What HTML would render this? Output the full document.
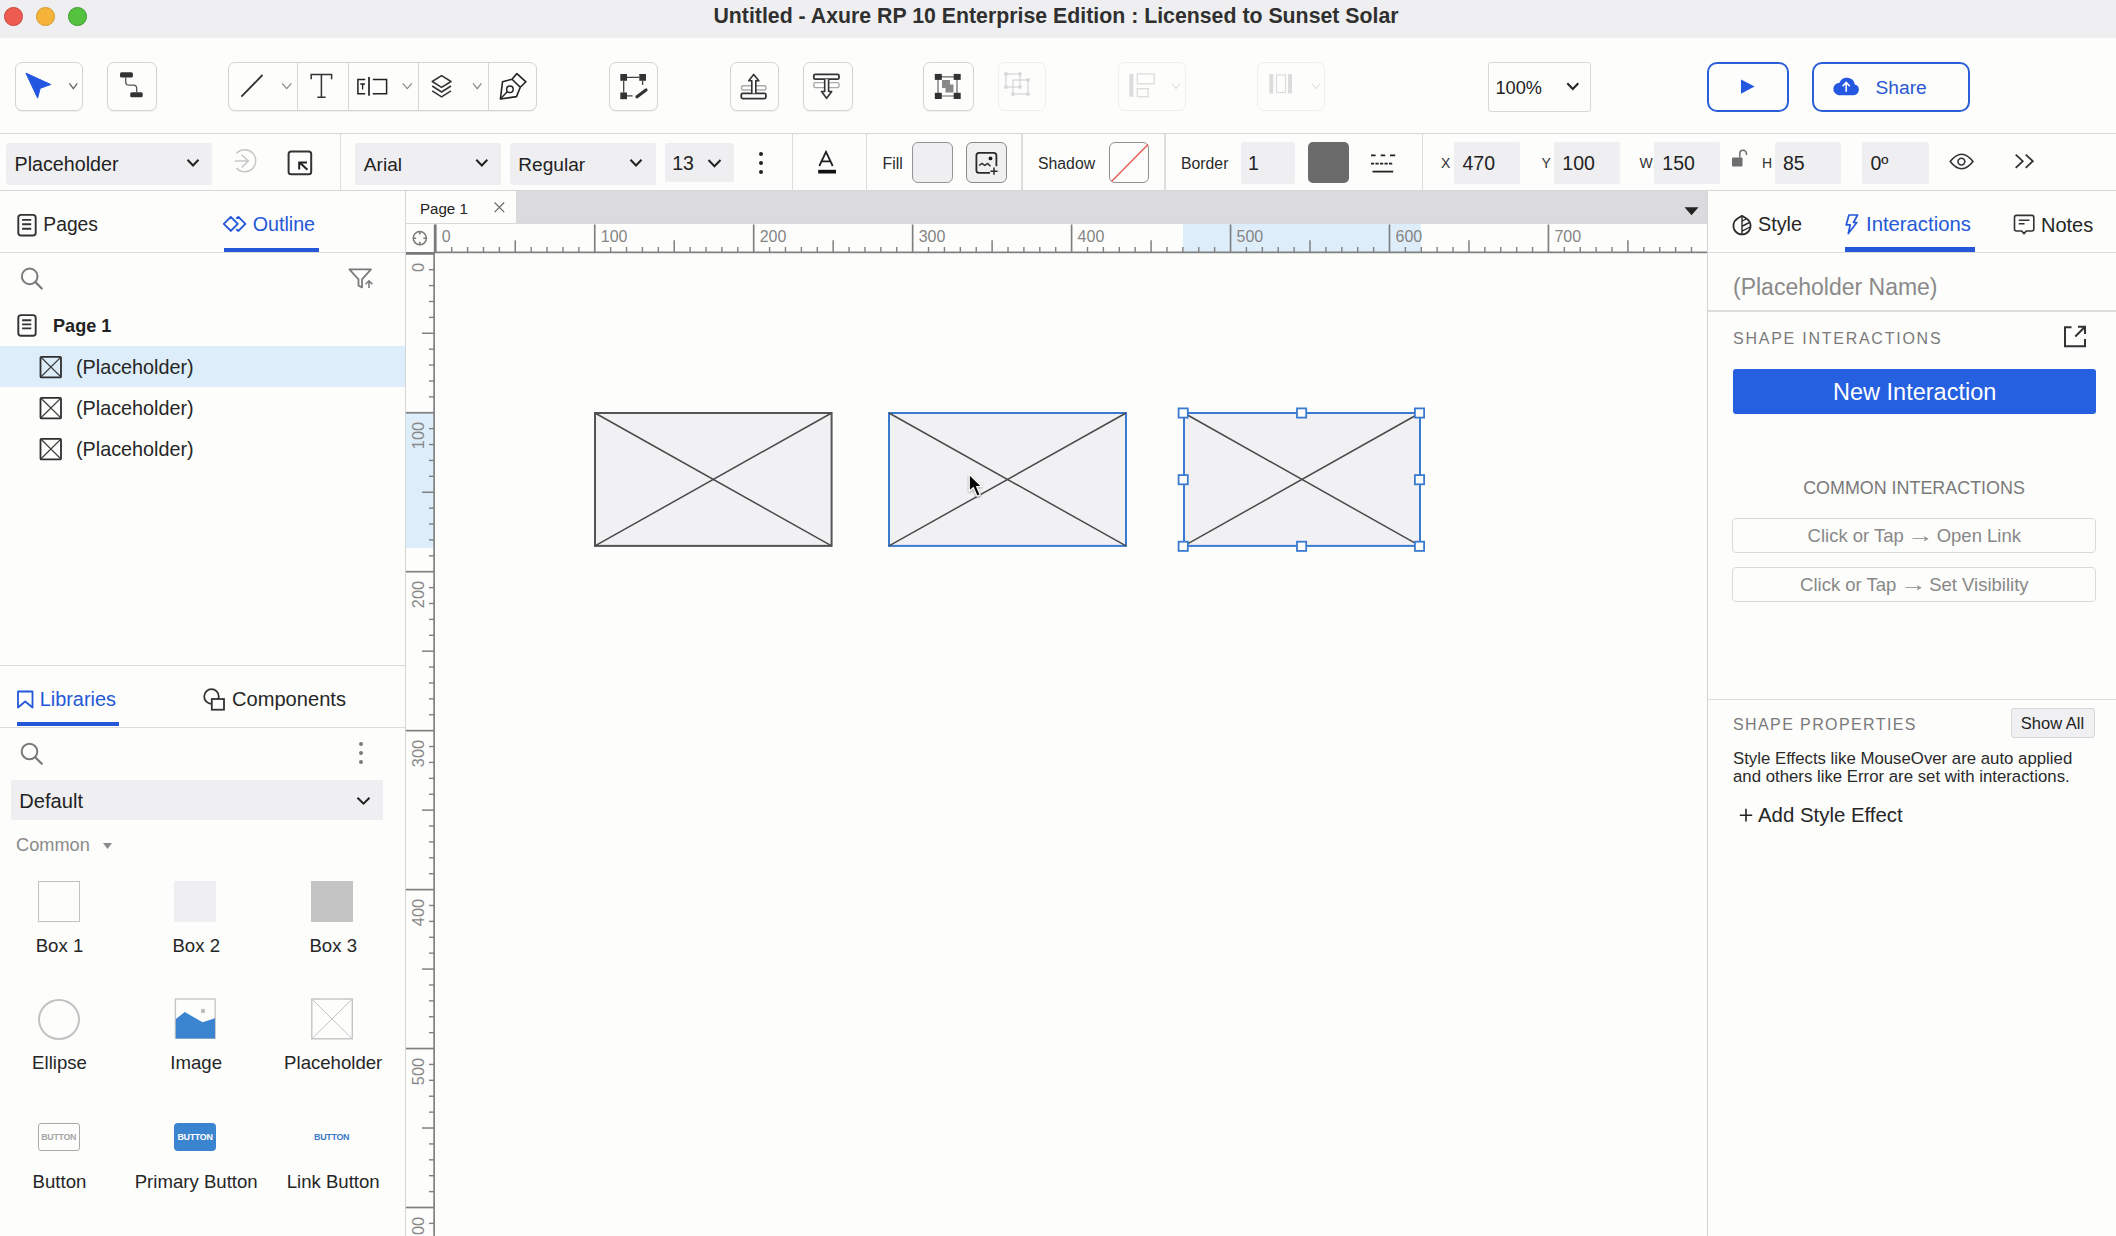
<!DOCTYPE html><html><head><meta charset="utf-8"><style>
html,body{margin:0;padding:0;}
body{width:2116px;height:1236px;overflow:hidden;position:relative;background:#fdfdfc;font-family:"Liberation Sans",sans-serif;}
div,span,svg{position:absolute;box-sizing:border-box;}
.t{white-space:nowrap;line-height:1;}
.ar{position:static;font-style:normal;display:inline-block;transform:scaleX(1.45);margin:0 2px;}
</style></head><body>
<div style="left:0px;top:0px;width:2116px;height:38px;background:#efeff1;"></div>
<div style="left:4.399999999999999px;top:7.300000000000001px;width:18.6px;height:18.6px;background:#ee5b51;border:1px solid #c8463c;border-radius:50%;"></div>
<div style="left:36.400000000000006px;top:7.300000000000001px;width:18.6px;height:18.6px;background:#f5b33a;border:1px solid #d49a2e;border-radius:50%;"></div>
<div style="left:68.0px;top:7.300000000000001px;width:18.6px;height:18.6px;background:#54c13f;border:1px solid #3f9a33;border-radius:50%;"></div>
<span class="t" style="left:556px;width:1000px;text-align:center;top:5.97px;font-size:21.3px;color:#303030;font-weight:700;">Untitled - Axure RP 10 Enterprise Edition : Licensed to Sunset Solar</span>
<div style="left:0px;top:38px;width:2116px;height:95px;background:#fdfdfc;"></div>
<div style="left:0px;top:133px;width:2116px;height:1px;background:#d6d6d6;"></div>
<div style="left:14.5px;top:62px;width:68.5px;height:49.3px;border:1.5px solid #d4d4d4;border-radius:7px;background:#fdfdfc;box-shadow:0 1px 1px rgba(0,0,0,0.06);"></div>
<svg style="left:14px;top:60px;" width="70" height="52" viewBox="14 60 70 52"><polygon points="25.9,73.1 50.8,84.5 40.2,88.3 37.6,98.1" fill="#2356e0" stroke="#2356e0" stroke-width="1" stroke-linejoin="round"/><polyline points="69.4,83.4 73.35,88.6 77.3,83.4" fill="none" stroke="#6a6a6a" stroke-width="1.4"/></svg>
<div style="left:106.8px;top:62px;width:50px;height:49.3px;border:1.5px solid #d4d4d4;border-radius:7px;background:#fdfdfc;box-shadow:0 1px 1px rgba(0,0,0,0.06);"></div>
<svg style="left:106px;top:60px;" width="52" height="52" viewBox="106 60 52 52"><rect x="120" y="72.2" width="12.9" height="5.3" rx="1.5" fill="#333"/><rect x="130.2" y="92.2" width="12.5" height="5" rx="1.5" fill="#333"/><path d="M125.7 77.5 V82 Q125.7 85.2 129 85.2 H133.5 Q136.7 85.2 136.7 88.5 V92.2" fill="none" stroke="#555" stroke-width="1.3"/></svg>
<div style="left:228px;top:61.8px;width:309.3px;height:49.3px;border:1.5px solid #d4d4d4;border-radius:7px;background:#fdfdfc;box-shadow:0 1px 1px rgba(0,0,0,0.06);"></div>
<div style="left:297px;top:63px;width:1px;height:47px;background:#d6d6d6;"></div>
<div style="left:348px;top:63px;width:1px;height:47px;background:#d6d6d6;"></div>
<div style="left:418px;top:63px;width:1px;height:47px;background:#d6d6d6;"></div>
<div style="left:488px;top:63px;width:1px;height:47px;background:#d6d6d6;"></div>
<svg style="left:226px;top:60px;" width="314" height="53" viewBox="226 60 314 53"><line x1="241.4" y1="96.6" x2="262.5" y2="75" stroke="#333" stroke-width="1.8"/><polyline points="282.2,83.4 286.75,88.6 291.3,83.4" fill="none" stroke="#8a8a8a" stroke-width="1.3"/><path d="M311.2 79.2 V74.4 H331.6 V79.2 M321.4 74.4 V97.3 M317.3 97.3 H325.6" fill="none" stroke="#333" stroke-width="1.5"/><path d="M365.2 79.4 H357.9 V93.8 H365.2 M372.8 79.4 H386.6 V93.8 H372.8" fill="none" stroke="#222" stroke-width="1.5"/><path d="M369 76.9 V95.8" stroke="#222" stroke-width="1.7"/><path d="M360.3 84 H365 M362.6 84 V89.5" stroke="#222" stroke-width="1.3"/><polyline points="402.7,83.4 407.25,88.6 411.8,83.4" fill="none" stroke="#8a8a8a" stroke-width="1.3"/><path d="M441.6 75.6 L451 81.5 L441.6 87.4 L432.2 81.5 Z" fill="none" stroke="#333" stroke-width="1.5" stroke-linejoin="round"/><path d="M432.2 86 L441.6 92 L451 86 M432.2 90.8 L441.6 96.8 L451 90.8" fill="none" stroke="#333" stroke-width="1.5" stroke-linejoin="round"/><polyline points="473,83.4 477.2,88.6 481.4,83.4" fill="none" stroke="#8a8a8a" stroke-width="1.3"/><path d="M500.4 99 L502.5 81.8 L512 79.2 L520.3 87.3 L516.5 96.6 Z M512 79.2 L516.9 73.6 L525.9 81.8 L520.3 87.3" fill="none" stroke="#222" stroke-width="1.6" stroke-linejoin="round"/><circle cx="509.9" cy="89.3" r="3.3" fill="none" stroke="#222" stroke-width="1.5"/><line x1="501" y1="98.3" x2="507.5" y2="91.6" stroke="#222" stroke-width="1.4"/></svg>
<div style="left:609.2px;top:61.8px;width:48.6px;height:49.5px;border:1.5px solid #d4d4d4;border-radius:7px;background:#fdfdfc;box-shadow:0 1px 1px rgba(0,0,0,0.06);"></div>
<svg style="left:608px;top:60px;" width="52" height="52" viewBox="608 60 52 52"><rect x="620.3" y="74" width="6.7" height="6.8" fill="#333"/><rect x="639.3" y="74" width="6.7" height="6.8" fill="#333"/><rect x="620.3" y="92.5" width="6.7" height="6.7" fill="#333"/><path d="M627 77.4 H639.3 M623.7 80.8 V92.5 M642.6 80.8 V85 M627 95.8 H632.6" stroke="#444" stroke-width="1.3" fill="none"/><path d="M637 96.8 L646 90" stroke="#333" stroke-width="3.2" stroke-linecap="round"/></svg>
<div style="left:730.3px;top:61.8px;width:48.5px;height:49.5px;border:1.5px solid #d4d4d4;border-radius:7px;background:#fdfdfc;box-shadow:0 1px 1px rgba(0,0,0,0.06);"></div>
<svg style="left:728px;top:60px;" width="54" height="52" viewBox="728 60 54 52"><rect x="741.5" y="85.7" width="24.5" height="4.3" rx="1.5" fill="none" stroke="#aaa" stroke-width="1.4"/><rect x="741.3" y="93.3" width="24.6" height="5.3" rx="1.5" fill="#fdfdfc" stroke="#333" stroke-width="1.8"/><path d="M751.8 93.3 V80.8 H748.7 L753.7 74.4 L758.8 80.8 H755.8 V93.3" fill="#fdfdfc" stroke="#333" stroke-width="1.6" stroke-linejoin="round"/></svg>
<div style="left:802.5px;top:61.8px;width:50px;height:49.5px;border:1.5px solid #d4d4d4;border-radius:7px;background:#fdfdfc;box-shadow:0 1px 1px rgba(0,0,0,0.06);"></div>
<svg style="left:800px;top:60px;" width="54" height="52" viewBox="800 60 54 52"><rect x="813.8" y="82.6" width="25.2" height="5" rx="1.5" fill="none" stroke="#aaa" stroke-width="1.4"/><rect x="813.8" y="74.4" width="25.2" height="4.8" rx="1.5" fill="#fdfdfc" stroke="#333" stroke-width="1.8"/><path d="M824.7 79.2 V91.5 H821.5 L826.6 98.3 L831.7 91.5 H828.6 V79.2" fill="#fdfdfc" stroke="#333" stroke-width="1.6" stroke-linejoin="round"/></svg>
<div style="left:923.3px;top:62px;width:50.3px;height:49px;border:1.5px solid #d4d4d4;border-radius:7px;background:#fdfdfc;box-shadow:0 1px 1px rgba(0,0,0,0.06);"></div>
<svg style="left:922px;top:60px;" width="54" height="52" viewBox="922 60 54 52"><path d="M938 76.8 H957 M938 96 H957 M938 76.8 V96 M957 76.8 V96" stroke="#666" stroke-width="1.2" fill="none"/><rect x="942" y="80" width="8" height="8" fill="#888"/><rect x="945.5" y="84.5" width="8" height="8" fill="#888"/><rect x="934.8" y="73.9" width="7" height="6" fill="#333"/><rect x="953.7" y="73.9" width="7" height="6" fill="#333"/><rect x="934.8" y="92.8" width="7" height="6.2" fill="#333"/><rect x="953.7" y="92.8" width="7" height="6.2" fill="#333"/></svg>
<div style="left:998px;top:62px;width:48px;height:49px;border:1.5px solid #efefef;border-radius:7px;background:#fdfdfc;"></div>
<svg style="left:996px;top:60px;" width="54" height="52" viewBox="996 60 54 52"><g fill="none" stroke="#d0d0d0" stroke-width="1.1"><rect x="1006" y="74" width="14" height="13"/><rect x="1013" y="80" width="15" height="14"/></g><g fill="#d8d8d8"><circle cx="1006" cy="74" r="2"/><circle cx="1020" cy="74" r="2"/><circle cx="1006" cy="87" r="2"/><circle cx="1020" cy="87" r="2"/><circle cx="1028" cy="80" r="2"/><circle cx="1013" cy="94" r="2"/><circle cx="1028" cy="94" r="2"/></g></svg>
<div style="left:1117.5px;top:62px;width:68.5px;height:49px;border:1.5px solid #efefef;border-radius:7px;background:#fdfdfc;"></div>
<svg style="left:1116px;top:60px;" width="72" height="52" viewBox="1116 60 72 52"><rect x="1129.4" y="73.9" width="4" height="22.8" fill="#dcdcdc"/><rect x="1137.3" y="73.9" width="16.9" height="9.9" fill="none" stroke="#dcdcdc" stroke-width="1.3"/><rect x="1137.3" y="88.7" width="10.9" height="8" fill="none" stroke="#dcdcdc" stroke-width="1.3"/><polyline points="1172,83.5 1176.0,88.5 1180,83.5" fill="none" stroke="#e0e0e0" stroke-width="1.2"/></svg>
<div style="left:1257.4px;top:62px;width:67.6px;height:49px;border:1.5px solid #efefef;border-radius:7px;background:#fdfdfc;"></div>
<svg style="left:1256px;top:60px;" width="72" height="52" viewBox="1256 60 72 52"><rect x="1269.3" y="74" width="4" height="19.5" fill="#dcdcdc"/><rect x="1288" y="74" width="4" height="19.5" fill="#dcdcdc"/><rect x="1276.5" y="75" width="9" height="17.5" fill="none" stroke="#dcdcdc" stroke-width="1.2"/><polyline points="1312,83.5 1316.0,88.5 1320,83.5" fill="none" stroke="#e0e0e0" stroke-width="1.2"/></svg>
<div style="left:1488px;top:62px;width:103px;height:49.5px;border:1.3px solid #d8d8d8;border-radius:3px;background:#fdfdfc;"></div>
<span class="t" style="left:1495.5px;top:79.39px;font-size:18.2px;color:#222;font-weight:400;">100%</span>
<svg style="left:1560px;top:75px;" width="25" height="25" viewBox="1560 75 25 25"><polyline points="1567.3,83.3 1572.8,89 1578.3,83.3" fill="none" stroke="#222" stroke-width="2.0"/></svg>
<div style="left:1707px;top:61.6px;width:81.5px;height:50.2px;border:2px solid #2a5fd6;border-radius:10px;background:#fdfdfc;"></div>
<svg style="left:1735px;top:75px;" width="25" height="25" viewBox="1735 75 25 25"><polygon points="1741,79.5 1741,93.8 1754.6,86.6" fill="#2458e0"/></svg>
<div style="left:1811.7px;top:61.6px;width:158px;height:50.2px;border:2px solid #2a5fd6;border-radius:10px;background:#fdfdfc;"></div>
<svg style="left:1830px;top:72px;" width="32" height="26" viewBox="1830 72 32 26"><path d="M1838.5 95.2 H1853.5 A5.5 5.5 0 0 0 1854.8 84.4 A8 8 0 0 0 1839.5 82.7 A6.3 6.3 0 0 0 1838.5 95.2 Z" fill="#2458e0"/><path d="M1846.2 91.7 V82.7 M1842.6 86.2 L1846.2 82.5 L1849.8 86.2" fill="none" stroke="#fff" stroke-width="1.6"/></svg>
<span class="t" style="left:1875.5px;top:78.35px;font-size:19.2px;color:#2a58d2;font-weight:400;">Share</span>
<div style="left:0px;top:134px;width:2116px;height:56px;background:#fdfdfc;"></div>
<div style="left:0px;top:190px;width:2116px;height:1px;background:#d6d6d6;"></div>
<div style="left:339.7px;top:134px;width:1.2px;height:56px;background:#dddddd;"></div>
<div style="left:791.6px;top:134px;width:1.2px;height:56px;background:#dddddd;"></div>
<div style="left:865.6999999999999px;top:134px;width:1.2px;height:56px;background:#dddddd;"></div>
<div style="left:1021.4px;top:134px;width:1.2px;height:56px;background:#dddddd;"></div>
<div style="left:1164.4px;top:134px;width:1.2px;height:56px;background:#dddddd;"></div>
<div style="left:1421.8000000000002px;top:134px;width:1.2px;height:56px;background:#dddddd;"></div>
<div style="left:6px;top:142.7px;width:206px;height:42px;background:#efeff1;border-radius:2px;"></div>
<span class="t" style="left:14.5px;top:154.52px;font-size:19.7px;color:#222;font-weight:400;">Placeholder</span>
<svg style="left:180px;top:150px;" width="25" height="25" viewBox="180 150 25 25"><polyline points="187.5,159.7 193.0,165.5 198.5,159.7" fill="none" stroke="#222" stroke-width="2.0"/></svg>
<svg style="left:228px;top:146px;" width="32" height="30" viewBox="228 146 32 30"><path d="M236.5 153.5 A11 11 0 1 1 236.5 168" fill="none" stroke="#c6c6c6" stroke-width="1.5"/><path d="M234.8 161 H248.4 M241.6 154.7 L248.4 161 L241.6 167.5" fill="none" stroke="#c6c6c6" stroke-width="1.5"/></svg>
<svg style="left:284px;top:146px;" width="32" height="32" viewBox="284 146 32 32"><rect x="288.6" y="151.4" width="22.6" height="22.8" rx="2.5" fill="none" stroke="#333" stroke-width="2"/><path d="M307.4 169.8 L299.4 162.2 M299.2 169.6 V162.4 H307" fill="none" stroke="#222" stroke-width="2"/></svg>
<div style="left:355px;top:142.7px;width:146px;height:42px;background:#efeff1;border-radius:2px;"></div>
<span class="t" style="left:363.8px;top:155.03px;font-size:19.1px;color:#222;font-weight:400;">Arial</span>
<svg style="left:465px;top:150px;" width="25" height="25" viewBox="465 150 25 25"><polyline points="476.3,159.7 481.8,165.5 487.3,159.7" fill="none" stroke="#222" stroke-width="2.0"/></svg>
<div style="left:510px;top:142.7px;width:145.6px;height:42px;background:#efeff1;border-radius:2px;"></div>
<span class="t" style="left:518.3px;top:155.03px;font-size:19.1px;color:#222;font-weight:400;">Regular</span>
<svg style="left:620px;top:150px;" width="25" height="25" viewBox="620 150 25 25"><polyline points="630.5,159.7 636.0,165.5 641.5,159.7" fill="none" stroke="#222" stroke-width="2.0"/></svg>
<div style="left:664.9px;top:142.8px;width:69px;height:39.5px;background:#efeff1;border-radius:2px;"></div>
<span class="t" style="left:672.2px;top:154.49px;font-size:19.5px;color:#222;font-weight:400;">13</span>
<svg style="left:700px;top:150px;" width="25" height="25" viewBox="700 150 25 25"><polyline points="708.5,160 714.5,166.2 720.5,160" fill="none" stroke="#222" stroke-width="2.0"/></svg>
<div style="left:758.9px;top:151.6px;width:4.2px;height:4.2px;background:#222;border-radius:50%;"></div>
<div style="left:758.9px;top:160.5px;width:4.2px;height:4.2px;background:#222;border-radius:50%;"></div>
<div style="left:758.9px;top:169.8px;width:4.2px;height:4.2px;background:#222;border-radius:50%;"></div>
<svg style="left:812px;top:146px;" width="30" height="30" viewBox="812 146 30 30"><path d="M819.3 166 L826 151.8 L832.7 166 M821.5 161.3 H830.5" fill="none" stroke="#222" stroke-width="1.8"/><rect x="818.2" y="169.8" width="17.8" height="3.7" fill="#111"/></svg>
<span class="t" style="left:882.5px;top:155.63px;font-size:15.8px;color:#2a2a2a;font-weight:400;">Fill</span>
<div style="left:911.8px;top:142.4px;width:40.9px;height:40.8px;border:1.8px solid #959595;border-radius:6px;background:#efeff1;"></div>
<div style="left:966px;top:142.4px;width:40.5px;height:40.8px;border:1.8px solid #8a8a8a;border-radius:6px;background:#f0f0f0;"></div>
<svg style="left:970px;top:148px;" width="34" height="30" viewBox="970 148 34 30"><path d="M990 172.9 H979 A2.6 2.6 0 0 1 976.4 170.3 V155.4 A2.6 2.6 0 0 1 979 152.8 H993.8 A2.6 2.6 0 0 1 996.4 155.4 V166.2" fill="none" stroke="#2a2a2a" stroke-width="1.8"/><circle cx="990.5" cy="158.4" r="1.9" fill="#1a1a1a"/><path d="M979.1 165.5 L982 163.4 L984.8 165.5 L987.7 163.4 L990.5 166.2" fill="none" stroke="#2a2a2a" stroke-width="1.4" stroke-linejoin="round"/><path d="M994 167.6 V174.8 M990.4 171.2 H997.6" stroke="#2a2a2a" stroke-width="1.5"/></svg>
<span class="t" style="left:1038px;top:155.63px;font-size:15.8px;color:#2a2a2a;font-weight:400;">Shadow</span>
<div style="left:1109.3px;top:142.4px;width:40px;height:40.8px;border:1.8px solid #8f8f8f;border-radius:6px;background:#fdfdfc;"></div>
<svg style="left:1109px;top:142px;" width="41" height="42" viewBox="1109 142 41 42"><line x1="1111.5" y1="181.5" x2="1148" y2="144.5" stroke="#e4605c" stroke-width="1.5"/></svg>
<span class="t" style="left:1181px;top:155.63px;font-size:15.8px;color:#2a2a2a;font-weight:400;">Border</span>
<div style="left:1241px;top:142.4px;width:53.5px;height:41.6px;background:#efeff1;border-radius:2px;"></div>
<span class="t" style="left:1248px;top:154.49px;font-size:19.5px;color:#222;font-weight:400;">1</span>
<div style="left:1308px;top:142.4px;width:40.5px;height:40.8px;background:#6b6b6b;border-radius:5px;"></div>
<svg style="left:1366px;top:150px;" width="34" height="26" viewBox="1366 150 34 26"><path d="M1371 155.4 H1375.6 M1380.7 155.4 H1385.2 M1390 155.4 H1395.2" stroke="#222" stroke-width="1.8"/><path d="M1371 163.6 H1393.2" stroke="#222" stroke-width="1.8" stroke-dasharray="3.2 1.3"/><path d="M1372.5 171.6 H1393.2" stroke="#222" stroke-width="1.8"/></svg>
<span class="t" style="left:1441.1px;top:155.75px;font-size:14px;color:#333;font-weight:400;">X</span>
<div style="left:1454.2px;top:142.4px;width:66px;height:41.2px;background:#efeff1;border-radius:2px;"></div>
<span class="t" style="left:1462.5px;top:154.49px;font-size:19.5px;color:#222;font-weight:400;">470</span>
<span class="t" style="left:1541.6px;top:155.75px;font-size:14px;color:#333;font-weight:400;">Y</span>
<div style="left:1554px;top:142.4px;width:66px;height:41.2px;background:#efeff1;border-radius:2px;"></div>
<span class="t" style="left:1562.3px;top:154.49px;font-size:19.5px;color:#222;font-weight:400;">100</span>
<span class="t" style="left:1639.5px;top:155.75px;font-size:14px;color:#333;font-weight:400;">W</span>
<div style="left:1654px;top:142.4px;width:66px;height:41.2px;background:#efeff1;border-radius:2px;"></div>
<span class="t" style="left:1662.3px;top:154.49px;font-size:19.5px;color:#222;font-weight:400;">150</span>
<svg style="left:1728px;top:145px;" width="24" height="26" viewBox="1728 145 24 26"><rect x="1732" y="157.5" width="10.5" height="9" rx="1" fill="#6e6e6e"/><path d="M1739.8 157.5 V153.5 A3.3 3.3 0 0 1 1746.4 153.5 V155" fill="none" stroke="#6e6e6e" stroke-width="1.5"/></svg>
<span class="t" style="left:1762px;top:155.75px;font-size:14px;color:#333;font-weight:400;">H</span>
<div style="left:1774.7px;top:142.4px;width:66.3px;height:41.2px;background:#efeff1;border-radius:2px;"></div>
<span class="t" style="left:1783px;top:154.49px;font-size:19.5px;color:#222;font-weight:400;">85</span>
<div style="left:1862px;top:142.4px;width:67px;height:41.2px;background:#efeff1;border-radius:2px;"></div>
<span class="t" style="left:1870.5px;top:154.49px;font-size:19.5px;color:#222;font-weight:400;">0º</span>
<svg style="left:1946px;top:150px;" width="32" height="24" viewBox="1946 150 32 24"><path d="M1950.2 161.6 Q1961.6 147 1973 161.6 Q1961.6 176 1950.2 161.6 Z" fill="none" stroke="#333" stroke-width="1.6" stroke-linejoin="round"/><circle cx="1961.4" cy="161.6" r="3.4" fill="none" stroke="#333" stroke-width="1.6"/></svg>
<svg style="left:2010px;top:150px;" width="28" height="24" viewBox="2010 150 28 24"><path d="M2015.7 154.6 L2022.8 161.2 L2015.7 167.9 M2025.7 154.6 L2032.8 161.2 L2025.7 167.9" fill="none" stroke="#333" stroke-width="1.8"/></svg>
<div style="left:0px;top:191px;width:405.5px;height:1045px;background:#fdfdfc;"></div>
<div style="left:405.2px;top:191px;width:1.2px;height:1045px;background:#d4d4d4;"></div>
<svg style="left:14px;top:210px;" width="26" height="30" viewBox="14 210 26 30"><rect x="18.3" y="214.9" width="17.4" height="20.6" rx="2.8" fill="none" stroke="#333" stroke-width="1.9"/><path d="M22.1 219.9 H31.2 M22.1 224.3 H31.2 M22.1 228.7 H31.2" stroke="#333" stroke-width="1.9"/></svg>
<span class="t" style="left:43.3px;top:214.86px;font-size:19.3px;color:#262626;font-weight:400;">Pages</span>
<svg style="left:220px;top:212px;" width="30" height="24" viewBox="220 212 30 24"><path d="M230.8 216.9 L237.8 223.9 L230.8 230.9 L223.8 223.9 Z M236.2 218.5 L238.4 216.9 L245.4 223.9 L238.4 230.9 L236.2 229.3" fill="none" stroke="#2458d8" stroke-width="1.9" stroke-linejoin="round"/></svg>
<span class="t" style="left:252.7px;top:214.52px;font-size:19.7px;color:#2458d8;font-weight:400;">Outline</span>
<div style="left:0px;top:252px;width:405.5px;height:1.3px;background:#dcdcdc;"></div>
<div style="left:224px;top:247.6px;width:95.3px;height:4px;background:#2458d8;"></div>
<svg style="left:18px;top:264px;" width="28" height="28" viewBox="18 264 28 28"><circle cx="29.7" cy="276.4" r="7.8" fill="none" stroke="#7a7a7a" stroke-width="2"/><line x1="35.4" y1="282.1" x2="41.8" y2="288.5" stroke="#7a7a7a" stroke-width="2.2" stroke-linecap="round"/></svg>
<svg style="left:346px;top:266px;" width="30" height="25" viewBox="346 266 30 25"><path d="M349.4 269.4 H371 L362 279.3 V287.4 L358.5 285.8 V279.3 Z" fill="none" stroke="#7a7a7a" stroke-width="1.8" stroke-linejoin="round"/><path d="M369 288 V281.5 M365.6 284.2 L369 280.8 L372.4 284.2" fill="none" stroke="#7a7a7a" stroke-width="1.6"/></svg>
<svg style="left:14px;top:310px;" width="26" height="30" viewBox="14 310 26 30"><rect x="18.3" y="315.1" width="17.4" height="20.6" rx="2.8" fill="none" stroke="#333" stroke-width="1.9"/><path d="M22.1 320.3 H31.3 M22.1 324.4 H31.3 M22.1 328.4 H31.3" stroke="#333" stroke-width="1.9"/></svg>
<span class="t" style="left:53px;top:317.28px;font-size:18.1px;color:#222;font-weight:700;">Page 1</span>
<div style="left:0px;top:345.6px;width:405.2px;height:41px;background:#ddedfa;"></div>
<svg style="left:36px;top:352.8px;" width="30" height="28" viewBox="36 352.8 30 28"><rect x="40.5" y="356.6" width="20.5" height="20.6" rx="1" fill="none" stroke="#2e2e2e" stroke-width="1.8"/><path d="M40.8 356.8 L61 376.8 M61 356.8 L40.8 376.8" stroke="#3a3a3a" stroke-width="1.1"/></svg>
<span class="t" style="left:76px;top:357.74px;font-size:19.8px;color:#262626;font-weight:400;">(Placeholder)</span>
<svg style="left:36px;top:394.1px;" width="30" height="28" viewBox="36 394.1 30 28"><rect x="40.5" y="397.90000000000003" width="20.5" height="20.6" rx="1" fill="none" stroke="#2e2e2e" stroke-width="1.8"/><path d="M40.8 398.1 L61 418.1 M61 398.1 L40.8 418.1" stroke="#3a3a3a" stroke-width="1.1"/></svg>
<span class="t" style="left:76px;top:399.04px;font-size:19.8px;color:#262626;font-weight:400;">(Placeholder)</span>
<svg style="left:36px;top:435.4px;" width="30" height="28" viewBox="36 435.4 30 28"><rect x="40.5" y="439.2" width="20.5" height="20.6" rx="1" fill="none" stroke="#2e2e2e" stroke-width="1.8"/><path d="M40.8 439.4 L61 459.4 M61 439.4 L40.8 459.4" stroke="#3a3a3a" stroke-width="1.1"/></svg>
<span class="t" style="left:76px;top:440.34px;font-size:19.8px;color:#262626;font-weight:400;">(Placeholder)</span>
<div style="left:0px;top:665px;width:405.5px;height:1.2px;background:#dcdcdc;"></div>
<svg style="left:14px;top:686px;" width="24" height="26" viewBox="14 686 24 26"><path d="M18 691.5 H32.5 V707.5 L25.2 701.5 L18 707.5 Z" fill="none" stroke="#2458d8" stroke-width="1.8" stroke-linejoin="round"/></svg>
<span class="t" style="left:39.7px;top:689.65px;font-size:19.9px;color:#2458d8;font-weight:400;">Libraries</span>
<svg style="left:200px;top:686px;" width="30" height="26" viewBox="200 686 30 26"><circle cx="211.5" cy="696.5" r="7.3" fill="none" stroke="#333" stroke-width="1.8"/><rect x="211.8" y="699" width="12.2" height="10.7" fill="#fdfdfc" stroke="#333" stroke-width="1.8"/><path d="M211.8 699 A7.3 7.3 0 0 1 218.7 699" fill="none"/></svg>
<span class="t" style="left:232px;top:689.49px;font-size:20.1px;color:#262626;font-weight:400;">Components</span>
<div style="left:0px;top:726.6px;width:405.5px;height:1.3px;background:#dcdcdc;"></div>
<div style="left:17px;top:721.8px;width:102px;height:4.4px;background:#2458d8;"></div>
<svg style="left:18px;top:740px;" width="28" height="28" viewBox="18 740 28 28"><circle cx="29.5" cy="751.5" r="7.8" fill="none" stroke="#7a7a7a" stroke-width="2"/><line x1="35.2" y1="757.2" x2="41.8" y2="763.8" stroke="#7a7a7a" stroke-width="2.2" stroke-linecap="round"/></svg>
<div style="left:359px;top:741.9px;width:4px;height:4px;background:#7a7a7a;border-radius:50%;"></div>
<div style="left:359px;top:751.2px;width:4px;height:4px;background:#7a7a7a;border-radius:50%;"></div>
<div style="left:359px;top:760.3px;width:4px;height:4px;background:#7a7a7a;border-radius:50%;"></div>
<div style="left:11px;top:779.5px;width:371.7px;height:40.8px;background:#efeff1;border-radius:2px;"></div>
<span class="t" style="left:19.3px;top:791.29px;font-size:20.1px;color:#222;font-weight:400;">Default</span>
<svg style="left:350px;top:790px;" width="25" height="25" viewBox="350 790 25 25"><polyline points="357.5,797.7 363.5,803.7 369.5,797.7" fill="none" stroke="#222" stroke-width="2.0"/></svg>
<span class="t" style="left:16px;top:835.59px;font-size:18.2px;color:#8a8a8a;font-weight:400;">Common</span>
<svg style="left:100px;top:838px;" width="16" height="14" viewBox="100 838 16 14"><polygon points="103,843 112,843 107.5,849" fill="#8a8a8a"/></svg>
<span class="t" style="left:-440.5px;width:1000px;text-align:center;top:937.06px;font-size:18.6px;color:#262626;font-weight:400;">Box 1</span>
<span class="t" style="left:-303.8px;width:1000px;text-align:center;top:937.06px;font-size:18.6px;color:#262626;font-weight:400;">Box 2</span>
<span class="t" style="left:-166.8px;width:1000px;text-align:center;top:937.06px;font-size:18.6px;color:#262626;font-weight:400;">Box 3</span>
<span class="t" style="left:-440.5px;width:1000px;text-align:center;top:1054.26px;font-size:18.6px;color:#262626;font-weight:400;">Ellipse</span>
<span class="t" style="left:-303.8px;width:1000px;text-align:center;top:1054.26px;font-size:18.6px;color:#262626;font-weight:400;">Image</span>
<span class="t" style="left:-166.8px;width:1000px;text-align:center;top:1054.26px;font-size:18.6px;color:#262626;font-weight:400;">Placeholder</span>
<span class="t" style="left:-440.5px;width:1000px;text-align:center;top:1172.76px;font-size:18.6px;color:#262626;font-weight:400;">Button</span>
<span class="t" style="left:-303.8px;width:1000px;text-align:center;top:1172.76px;font-size:18.6px;color:#262626;font-weight:400;">Primary Button</span>
<span class="t" style="left:-166.8px;width:1000px;text-align:center;top:1172.76px;font-size:18.6px;color:#262626;font-weight:400;">Link Button</span>
<div style="left:38px;top:880.7px;width:41.5px;height:41.2px;border:1.5px solid #c2c2c2;background:#fdfdfc;"></div>
<div style="left:174px;top:880.7px;width:41.8px;height:41.2px;background:#efeff1;"></div>
<div style="left:311px;top:880.7px;width:41.8px;height:41.2px;background:#c4c4c4;"></div>
<div style="left:38px;top:998.5px;width:41.5px;height:41px;border:2px solid #c2c2c2;border-radius:50%;"></div>
<svg style="left:172px;top:996px;" width="46" height="46" viewBox="172 996 46 46"><rect x="175.4" y="999" width="39.8" height="39.3" fill="#fdfdfc" stroke="#c4c4c4" stroke-width="1.3"/><path d="M175.8 1019 L184.8 1012 L202.6 1022.3 L215 1018.2 V1038.6 H175.8 Z" fill="#3a84d0"/><circle cx="203" cy="1011" r="2.2" fill="#bbb"/></svg>
<svg style="left:309px;top:996px;" width="46" height="46" viewBox="309 996 46 46"><rect x="311.8" y="999" width="40.5" height="39.8" fill="#fdfdfc" stroke="#c4c4c4" stroke-width="1.4"/><path d="M311.8 999 L352.3 1038.8 M352.3 999 L311.8 1038.8" stroke="#c4c4c4" stroke-width="1"/></svg>
<div style="left:38px;top:1122.7px;width:41.5px;height:28px;border:1.8px solid #aaa;border-radius:3px;"></div>
<span class="t" style="left:-441.3px;width:1000px;text-align:center;top:1132.77px;font-size:8.9px;color:#a8a8a8;font-weight:700;letter-spacing:-0.3px;">BUTTON</span>
<div style="left:174.4px;top:1122.7px;width:41.3px;height:28px;background:#3a84d0;border-radius:4px;"></div>
<span class="t" style="left:-305px;width:1000px;text-align:center;top:1132.77px;font-size:8.9px;color:#fff;font-weight:700;letter-spacing:-0.3px;">BUTTON</span>
<span class="t" style="left:-168.39999999999998px;width:1000px;text-align:center;top:1132.77px;font-size:8.9px;color:#3a7ac8;font-weight:700;letter-spacing:-0.3px;">BUTTON</span>
<div style="left:406.4px;top:191px;width:1301px;height:1045px;background:#fdfdfb;"></div>
<div style="left:406.4px;top:191px;width:1301px;height:33px;background:#dbdbdd;"></div>
<div style="left:406.4px;top:191px;width:110px;height:33px;background:#fdfdfc;"></div>
<div style="left:406.4px;top:222.6px;width:1301px;height:1.8px;background:#d9d9db;"></div>
<span class="t" style="left:420px;top:200.92px;font-size:15.1px;color:#222;font-weight:400;">Page 1</span>
<svg style="left:490px;top:198px;" width="20" height="20" viewBox="490 198 20 20"><path d="M494.6 202.5 L504.2 212.1 M504.2 202.5 L494.6 212.1" stroke="#6a6a6a" stroke-width="1.2"/></svg>
<svg style="left:1680px;top:200px;" width="24" height="20" viewBox="1680 200 24 20"><polygon points="1684.5,207.2 1698.5,207.2 1691.5,215.2" fill="#222"/></svg>
<div style="left:406.4px;top:224px;width:1301px;height:29px;background:#fdfdfc;"></div>
<div style="left:406.4px;top:253px;width:28px;height:983px;background:#fdfdfc;"></div>
<div style="left:1182.865px;top:224px;width:238.42499999999998px;height:28px;background:#ddedfa;"></div>
<div style="left:406.4px;top:412.75px;width:27.5px;height:135.1075px;background:#ddedfa;"></div>
<svg style="left:406px;top:224px;" width="1302" height="30" viewBox="406 224 1302 30"><line x1="435.80" y1="224.5" x2="435.80" y2="252.5" stroke="#808080" stroke-width="1.7"/><line x1="451.69" y1="247" x2="451.69" y2="252.5" stroke="#808080" stroke-width="1.4"/><line x1="467.59" y1="247" x2="467.59" y2="252.5" stroke="#808080" stroke-width="1.4"/><line x1="483.49" y1="247" x2="483.49" y2="252.5" stroke="#808080" stroke-width="1.4"/><line x1="499.38" y1="247" x2="499.38" y2="252.5" stroke="#808080" stroke-width="1.4"/><line x1="515.27" y1="240.3" x2="515.27" y2="252.5" stroke="#808080" stroke-width="1.5"/><line x1="531.17" y1="247" x2="531.17" y2="252.5" stroke="#808080" stroke-width="1.4"/><line x1="547.07" y1="247" x2="547.07" y2="252.5" stroke="#808080" stroke-width="1.4"/><line x1="562.96" y1="247" x2="562.96" y2="252.5" stroke="#808080" stroke-width="1.4"/><line x1="578.86" y1="247" x2="578.86" y2="252.5" stroke="#808080" stroke-width="1.4"/><line x1="594.75" y1="224.5" x2="594.75" y2="252.5" stroke="#808080" stroke-width="1.7"/><line x1="610.64" y1="247" x2="610.64" y2="252.5" stroke="#808080" stroke-width="1.4"/><line x1="626.54" y1="247" x2="626.54" y2="252.5" stroke="#808080" stroke-width="1.4"/><line x1="642.43" y1="247" x2="642.43" y2="252.5" stroke="#808080" stroke-width="1.4"/><line x1="658.33" y1="247" x2="658.33" y2="252.5" stroke="#808080" stroke-width="1.4"/><line x1="674.23" y1="240.3" x2="674.23" y2="252.5" stroke="#808080" stroke-width="1.5"/><line x1="690.12" y1="247" x2="690.12" y2="252.5" stroke="#808080" stroke-width="1.4"/><line x1="706.01" y1="247" x2="706.01" y2="252.5" stroke="#808080" stroke-width="1.4"/><line x1="721.91" y1="247" x2="721.91" y2="252.5" stroke="#808080" stroke-width="1.4"/><line x1="737.81" y1="247" x2="737.81" y2="252.5" stroke="#808080" stroke-width="1.4"/><line x1="753.70" y1="224.5" x2="753.70" y2="252.5" stroke="#808080" stroke-width="1.7"/><line x1="769.60" y1="247" x2="769.60" y2="252.5" stroke="#808080" stroke-width="1.4"/><line x1="785.49" y1="247" x2="785.49" y2="252.5" stroke="#808080" stroke-width="1.4"/><line x1="801.38" y1="247" x2="801.38" y2="252.5" stroke="#808080" stroke-width="1.4"/><line x1="817.28" y1="247" x2="817.28" y2="252.5" stroke="#808080" stroke-width="1.4"/><line x1="833.17" y1="240.3" x2="833.17" y2="252.5" stroke="#808080" stroke-width="1.5"/><line x1="849.07" y1="247" x2="849.07" y2="252.5" stroke="#808080" stroke-width="1.4"/><line x1="864.96" y1="247" x2="864.96" y2="252.5" stroke="#808080" stroke-width="1.4"/><line x1="880.86" y1="247" x2="880.86" y2="252.5" stroke="#808080" stroke-width="1.4"/><line x1="896.75" y1="247" x2="896.75" y2="252.5" stroke="#808080" stroke-width="1.4"/><line x1="912.65" y1="224.5" x2="912.65" y2="252.5" stroke="#808080" stroke-width="1.7"/><line x1="928.54" y1="247" x2="928.54" y2="252.5" stroke="#808080" stroke-width="1.4"/><line x1="944.44" y1="247" x2="944.44" y2="252.5" stroke="#808080" stroke-width="1.4"/><line x1="960.34" y1="247" x2="960.34" y2="252.5" stroke="#808080" stroke-width="1.4"/><line x1="976.23" y1="247" x2="976.23" y2="252.5" stroke="#808080" stroke-width="1.4"/><line x1="992.12" y1="240.3" x2="992.12" y2="252.5" stroke="#808080" stroke-width="1.5"/><line x1="1008.02" y1="247" x2="1008.02" y2="252.5" stroke="#808080" stroke-width="1.4"/><line x1="1023.91" y1="247" x2="1023.91" y2="252.5" stroke="#808080" stroke-width="1.4"/><line x1="1039.81" y1="247" x2="1039.81" y2="252.5" stroke="#808080" stroke-width="1.4"/><line x1="1055.70" y1="247" x2="1055.70" y2="252.5" stroke="#808080" stroke-width="1.4"/><line x1="1071.60" y1="224.5" x2="1071.60" y2="252.5" stroke="#808080" stroke-width="1.7"/><line x1="1087.49" y1="247" x2="1087.49" y2="252.5" stroke="#808080" stroke-width="1.4"/><line x1="1103.39" y1="247" x2="1103.39" y2="252.5" stroke="#808080" stroke-width="1.4"/><line x1="1119.29" y1="247" x2="1119.29" y2="252.5" stroke="#808080" stroke-width="1.4"/><line x1="1135.18" y1="247" x2="1135.18" y2="252.5" stroke="#808080" stroke-width="1.4"/><line x1="1151.08" y1="240.3" x2="1151.08" y2="252.5" stroke="#808080" stroke-width="1.5"/><line x1="1166.97" y1="247" x2="1166.97" y2="252.5" stroke="#808080" stroke-width="1.4"/><line x1="1182.87" y1="247" x2="1182.87" y2="252.5" stroke="#808080" stroke-width="1.4"/><line x1="1198.76" y1="247" x2="1198.76" y2="252.5" stroke="#808080" stroke-width="1.4"/><line x1="1214.65" y1="247" x2="1214.65" y2="252.5" stroke="#808080" stroke-width="1.4"/><line x1="1230.55" y1="224.5" x2="1230.55" y2="252.5" stroke="#808080" stroke-width="1.7"/><line x1="1246.44" y1="247" x2="1246.44" y2="252.5" stroke="#808080" stroke-width="1.4"/><line x1="1262.34" y1="247" x2="1262.34" y2="252.5" stroke="#808080" stroke-width="1.4"/><line x1="1278.23" y1="247" x2="1278.23" y2="252.5" stroke="#808080" stroke-width="1.4"/><line x1="1294.13" y1="247" x2="1294.13" y2="252.5" stroke="#808080" stroke-width="1.4"/><line x1="1310.02" y1="240.3" x2="1310.02" y2="252.5" stroke="#808080" stroke-width="1.5"/><line x1="1325.92" y1="247" x2="1325.92" y2="252.5" stroke="#808080" stroke-width="1.4"/><line x1="1341.82" y1="247" x2="1341.82" y2="252.5" stroke="#808080" stroke-width="1.4"/><line x1="1357.71" y1="247" x2="1357.71" y2="252.5" stroke="#808080" stroke-width="1.4"/><line x1="1373.61" y1="247" x2="1373.61" y2="252.5" stroke="#808080" stroke-width="1.4"/><line x1="1389.50" y1="224.5" x2="1389.50" y2="252.5" stroke="#808080" stroke-width="1.7"/><line x1="1405.39" y1="247" x2="1405.39" y2="252.5" stroke="#808080" stroke-width="1.4"/><line x1="1421.29" y1="247" x2="1421.29" y2="252.5" stroke="#808080" stroke-width="1.4"/><line x1="1437.18" y1="247" x2="1437.18" y2="252.5" stroke="#808080" stroke-width="1.4"/><line x1="1453.08" y1="247" x2="1453.08" y2="252.5" stroke="#808080" stroke-width="1.4"/><line x1="1468.97" y1="240.3" x2="1468.97" y2="252.5" stroke="#808080" stroke-width="1.5"/><line x1="1484.87" y1="247" x2="1484.87" y2="252.5" stroke="#808080" stroke-width="1.4"/><line x1="1500.76" y1="247" x2="1500.76" y2="252.5" stroke="#808080" stroke-width="1.4"/><line x1="1516.66" y1="247" x2="1516.66" y2="252.5" stroke="#808080" stroke-width="1.4"/><line x1="1532.55" y1="247" x2="1532.55" y2="252.5" stroke="#808080" stroke-width="1.4"/><line x1="1548.45" y1="224.5" x2="1548.45" y2="252.5" stroke="#808080" stroke-width="1.7"/><line x1="1564.34" y1="247" x2="1564.34" y2="252.5" stroke="#808080" stroke-width="1.4"/><line x1="1580.24" y1="247" x2="1580.24" y2="252.5" stroke="#808080" stroke-width="1.4"/><line x1="1596.13" y1="247" x2="1596.13" y2="252.5" stroke="#808080" stroke-width="1.4"/><line x1="1612.03" y1="247" x2="1612.03" y2="252.5" stroke="#808080" stroke-width="1.4"/><line x1="1627.92" y1="240.3" x2="1627.92" y2="252.5" stroke="#808080" stroke-width="1.5"/><line x1="1643.82" y1="247" x2="1643.82" y2="252.5" stroke="#808080" stroke-width="1.4"/><line x1="1659.71" y1="247" x2="1659.71" y2="252.5" stroke="#808080" stroke-width="1.4"/><line x1="1675.61" y1="247" x2="1675.61" y2="252.5" stroke="#808080" stroke-width="1.4"/><line x1="1691.50" y1="247" x2="1691.50" y2="252.5" stroke="#808080" stroke-width="1.4"/><line x1="434" y1="252.3" x2="1707" y2="252.3" stroke="#808080" stroke-width="1.7"/></svg>
<span class="t" style="left:441.8px;top:228.66px;font-size:16px;color:#858585;font-weight:400;">0</span>
<span class="t" style="left:600.75px;top:228.66px;font-size:16px;color:#858585;font-weight:400;">100</span>
<span class="t" style="left:759.7px;top:228.66px;font-size:16px;color:#858585;font-weight:400;">200</span>
<span class="t" style="left:918.65px;top:228.66px;font-size:16px;color:#858585;font-weight:400;">300</span>
<span class="t" style="left:1077.6px;top:228.66px;font-size:16px;color:#858585;font-weight:400;">400</span>
<span class="t" style="left:1236.55px;top:228.66px;font-size:16px;color:#858585;font-weight:400;">500</span>
<span class="t" style="left:1395.5px;top:228.66px;font-size:16px;color:#858585;font-weight:400;">600</span>
<span class="t" style="left:1554.4499999999998px;top:228.66px;font-size:16px;color:#858585;font-weight:400;">700</span>
<svg style="left:406px;top:224px;" width="30" height="1012" viewBox="406 224 30 1012"><line x1="406" y1="253.80" x2="434" y2="253.80" stroke="#808080" stroke-width="1.7"/><line x1="429" y1="269.69" x2="434" y2="269.69" stroke="#808080" stroke-width="1.4"/><line x1="429" y1="285.59" x2="434" y2="285.59" stroke="#808080" stroke-width="1.4"/><line x1="429" y1="301.49" x2="434" y2="301.49" stroke="#808080" stroke-width="1.4"/><line x1="429" y1="317.38" x2="434" y2="317.38" stroke="#808080" stroke-width="1.4"/><line x1="422" y1="333.27" x2="434" y2="333.27" stroke="#808080" stroke-width="1.5"/><line x1="429" y1="349.17" x2="434" y2="349.17" stroke="#808080" stroke-width="1.4"/><line x1="429" y1="365.06" x2="434" y2="365.06" stroke="#808080" stroke-width="1.4"/><line x1="429" y1="380.96" x2="434" y2="380.96" stroke="#808080" stroke-width="1.4"/><line x1="429" y1="396.86" x2="434" y2="396.86" stroke="#808080" stroke-width="1.4"/><line x1="406" y1="412.75" x2="434" y2="412.75" stroke="#808080" stroke-width="1.7"/><line x1="429" y1="428.64" x2="434" y2="428.64" stroke="#808080" stroke-width="1.4"/><line x1="429" y1="444.54" x2="434" y2="444.54" stroke="#808080" stroke-width="1.4"/><line x1="429" y1="460.44" x2="434" y2="460.44" stroke="#808080" stroke-width="1.4"/><line x1="429" y1="476.33" x2="434" y2="476.33" stroke="#808080" stroke-width="1.4"/><line x1="422" y1="492.23" x2="434" y2="492.23" stroke="#808080" stroke-width="1.5"/><line x1="429" y1="508.12" x2="434" y2="508.12" stroke="#808080" stroke-width="1.4"/><line x1="429" y1="524.01" x2="434" y2="524.01" stroke="#808080" stroke-width="1.4"/><line x1="429" y1="539.91" x2="434" y2="539.91" stroke="#808080" stroke-width="1.4"/><line x1="429" y1="555.81" x2="434" y2="555.81" stroke="#808080" stroke-width="1.4"/><line x1="406" y1="571.70" x2="434" y2="571.70" stroke="#808080" stroke-width="1.7"/><line x1="429" y1="587.60" x2="434" y2="587.60" stroke="#808080" stroke-width="1.4"/><line x1="429" y1="603.49" x2="434" y2="603.49" stroke="#808080" stroke-width="1.4"/><line x1="429" y1="619.38" x2="434" y2="619.38" stroke="#808080" stroke-width="1.4"/><line x1="429" y1="635.28" x2="434" y2="635.28" stroke="#808080" stroke-width="1.4"/><line x1="422" y1="651.17" x2="434" y2="651.17" stroke="#808080" stroke-width="1.5"/><line x1="429" y1="667.07" x2="434" y2="667.07" stroke="#808080" stroke-width="1.4"/><line x1="429" y1="682.96" x2="434" y2="682.96" stroke="#808080" stroke-width="1.4"/><line x1="429" y1="698.86" x2="434" y2="698.86" stroke="#808080" stroke-width="1.4"/><line x1="429" y1="714.75" x2="434" y2="714.75" stroke="#808080" stroke-width="1.4"/><line x1="406" y1="730.65" x2="434" y2="730.65" stroke="#808080" stroke-width="1.7"/><line x1="429" y1="746.54" x2="434" y2="746.54" stroke="#808080" stroke-width="1.4"/><line x1="429" y1="762.44" x2="434" y2="762.44" stroke="#808080" stroke-width="1.4"/><line x1="429" y1="778.34" x2="434" y2="778.34" stroke="#808080" stroke-width="1.4"/><line x1="429" y1="794.23" x2="434" y2="794.23" stroke="#808080" stroke-width="1.4"/><line x1="422" y1="810.12" x2="434" y2="810.12" stroke="#808080" stroke-width="1.5"/><line x1="429" y1="826.02" x2="434" y2="826.02" stroke="#808080" stroke-width="1.4"/><line x1="429" y1="841.91" x2="434" y2="841.91" stroke="#808080" stroke-width="1.4"/><line x1="429" y1="857.81" x2="434" y2="857.81" stroke="#808080" stroke-width="1.4"/><line x1="429" y1="873.70" x2="434" y2="873.70" stroke="#808080" stroke-width="1.4"/><line x1="406" y1="889.60" x2="434" y2="889.60" stroke="#808080" stroke-width="1.7"/><line x1="429" y1="905.49" x2="434" y2="905.49" stroke="#808080" stroke-width="1.4"/><line x1="429" y1="921.39" x2="434" y2="921.39" stroke="#808080" stroke-width="1.4"/><line x1="429" y1="937.29" x2="434" y2="937.29" stroke="#808080" stroke-width="1.4"/><line x1="429" y1="953.18" x2="434" y2="953.18" stroke="#808080" stroke-width="1.4"/><line x1="422" y1="969.08" x2="434" y2="969.08" stroke="#808080" stroke-width="1.5"/><line x1="429" y1="984.97" x2="434" y2="984.97" stroke="#808080" stroke-width="1.4"/><line x1="429" y1="1000.87" x2="434" y2="1000.87" stroke="#808080" stroke-width="1.4"/><line x1="429" y1="1016.76" x2="434" y2="1016.76" stroke="#808080" stroke-width="1.4"/><line x1="429" y1="1032.65" x2="434" y2="1032.65" stroke="#808080" stroke-width="1.4"/><line x1="406" y1="1048.55" x2="434" y2="1048.55" stroke="#808080" stroke-width="1.7"/><line x1="429" y1="1064.44" x2="434" y2="1064.44" stroke="#808080" stroke-width="1.4"/><line x1="429" y1="1080.34" x2="434" y2="1080.34" stroke="#808080" stroke-width="1.4"/><line x1="429" y1="1096.23" x2="434" y2="1096.23" stroke="#808080" stroke-width="1.4"/><line x1="429" y1="1112.13" x2="434" y2="1112.13" stroke="#808080" stroke-width="1.4"/><line x1="422" y1="1128.02" x2="434" y2="1128.02" stroke="#808080" stroke-width="1.5"/><line x1="429" y1="1143.92" x2="434" y2="1143.92" stroke="#808080" stroke-width="1.4"/><line x1="429" y1="1159.82" x2="434" y2="1159.82" stroke="#808080" stroke-width="1.4"/><line x1="429" y1="1175.71" x2="434" y2="1175.71" stroke="#808080" stroke-width="1.4"/><line x1="429" y1="1191.61" x2="434" y2="1191.61" stroke="#808080" stroke-width="1.4"/><line x1="406" y1="1207.50" x2="434" y2="1207.50" stroke="#808080" stroke-width="1.7"/><line x1="429" y1="1223.39" x2="434" y2="1223.39" stroke="#808080" stroke-width="1.4"/><line x1="434.1" y1="253" x2="434.1" y2="1236" stroke="#808080" stroke-width="1.7"/><line x1="406" y1="253.2" x2="434" y2="253.2" stroke="#787878" stroke-width="2.4"/><line x1="435.1" y1="224.5" x2="435.1" y2="253" stroke="#7a7a7a" stroke-width="2.6"/></svg>
<span class="t" style="left:410px;top:362.80px;width:100px;text-align:right;font-size:16.3px;color:#888;transform-origin:0 0;transform:rotate(-90deg);">0</span>
<span class="t" style="left:410px;top:521.75px;width:100px;text-align:right;font-size:16.3px;color:#888;transform-origin:0 0;transform:rotate(-90deg);">100</span>
<span class="t" style="left:410px;top:680.70px;width:100px;text-align:right;font-size:16.3px;color:#888;transform-origin:0 0;transform:rotate(-90deg);">200</span>
<span class="t" style="left:410px;top:839.65px;width:100px;text-align:right;font-size:16.3px;color:#888;transform-origin:0 0;transform:rotate(-90deg);">300</span>
<span class="t" style="left:410px;top:998.60px;width:100px;text-align:right;font-size:16.3px;color:#888;transform-origin:0 0;transform:rotate(-90deg);">400</span>
<span class="t" style="left:410px;top:1157.55px;width:100px;text-align:right;font-size:16.3px;color:#888;transform-origin:0 0;transform:rotate(-90deg);">500</span>
<span class="t" style="left:410px;top:1316.50px;width:100px;text-align:right;font-size:16.3px;color:#888;transform-origin:0 0;transform:rotate(-90deg);">600</span>
<svg style="left:408px;top:226px;" width="26" height="26" viewBox="408 226 26 26"><circle cx="419.8" cy="238.2" r="6.6" fill="none" stroke="#7a7a7a" stroke-width="1.5"/><path d="M419.8 231.6 V234.6 M419.8 241.8 V244.8 M413.2 238.2 H416.2 M423.4 238.2 H426.4" stroke="#7a7a7a" stroke-width="1.6"/></svg>
<svg style="left:592.3px;top:410.4px;" width="242.6" height="138.9" viewBox="592.3 410.4 242.6 138.9"><rect x="595.3" y="413.4" width="236.6" height="132.9" fill="#f1f1f3" stroke="#555" stroke-width="2"/><path d="M595.3 413.4 L831.9 546.3 M831.9 413.4 L595.3 546.3" stroke="#4a4a4a" stroke-width="1.5"/></svg>
<svg style="left:886px;top:410.4px;" width="243" height="138.9" viewBox="886 410.4 243 138.9"><rect x="889" y="413.4" width="237" height="132.9" fill="#f1f1f3" stroke="#3a7bd0" stroke-width="2"/><path d="M889 413.4 L1126 546.3 M1126 413.4 L889 546.3" stroke="#4a4a4a" stroke-width="1.5"/></svg>
<svg style="left:1180.5px;top:410.4px;" width="242" height="138.9" viewBox="1180.5 410.4 242 138.9"><rect x="1183.5" y="413.4" width="236" height="132.9" fill="#f1f1f3" stroke="#3a7bd0" stroke-width="2"/><path d="M1183.5 413.4 L1419.5 546.3 M1419.5 413.4 L1183.5 546.3" stroke="#4a4a4a" stroke-width="1.5"/></svg>
<svg style="left:1170px;top:400px;" width="262" height="160" viewBox="1170 400 262 160"><rect x="1178.6000000000001" y="408.4" width="9.2" height="9.2" fill="#fdfdfc" stroke="#3a7bd0" stroke-width="1.8"/><rect x="1178.6000000000001" y="475.09999999999997" width="9.2" height="9.2" fill="#fdfdfc" stroke="#3a7bd0" stroke-width="1.8"/><rect x="1178.6000000000001" y="541.6999999999999" width="9.2" height="9.2" fill="#fdfdfc" stroke="#3a7bd0" stroke-width="1.8"/><rect x="1297.0" y="408.4" width="9.2" height="9.2" fill="#fdfdfc" stroke="#3a7bd0" stroke-width="1.8"/><rect x="1297.0" y="541.6999999999999" width="9.2" height="9.2" fill="#fdfdfc" stroke="#3a7bd0" stroke-width="1.8"/><rect x="1414.9" y="408.4" width="9.2" height="9.2" fill="#fdfdfc" stroke="#3a7bd0" stroke-width="1.8"/><rect x="1414.9" y="475.09999999999997" width="9.2" height="9.2" fill="#fdfdfc" stroke="#3a7bd0" stroke-width="1.8"/><rect x="1414.9" y="541.6999999999999" width="9.2" height="9.2" fill="#fdfdfc" stroke="#3a7bd0" stroke-width="1.8"/></svg>
<svg style="left:960px;top:468px;" width="30" height="34" viewBox="960 468 30 34"><path d="M969.2 474.3 L969.2 491.2 L973.3 487.7 L977 496.3 L980.3 494.9 L976.7 486.6 L981.6 486.4 Z" fill="#0a0a0a" stroke="#fff" stroke-width="1.3" stroke-linejoin="round" style="filter:drop-shadow(0 1px 1px rgba(0,0,0,0.35))"/></svg>
<div style="left:1707.5px;top:191px;width:408.5px;height:1045px;background:#fdfdfc;"></div>
<div style="left:1707px;top:191px;width:1.2px;height:1045px;background:#d4d4d4;"></div>
<svg style="left:1730px;top:212px;" width="26" height="26" viewBox="1730 212 26 26"><path d="M1742 215.8 L1746.39 218.41 A8.6 8.6 0 1 1 1737.61 218.41 Z" fill="none" stroke="#2a2a2a" stroke-width="1.7" stroke-linejoin="round"/><path d="M1742 216 V234 M1742.5 221 L1746 219 M1742.5 226 L1749.5 222.5 M1742.5 230.8 L1750 227" stroke="#2a2a2a" stroke-width="1.4"/></svg>
<span class="t" style="left:1758px;top:214.74px;font-size:19.8px;color:#262626;font-weight:400;">Style</span>
<svg style="left:1842px;top:212px;" width="20" height="26" viewBox="1842 212 20 26"><path d="M1849 215 H1857.6 L1853.5 222.5 H1856.8 L1848.3 233.5 L1850.2 224.8 H1846.2 Z" fill="none" stroke="#2458d8" stroke-width="1.7" stroke-linejoin="round"/></svg>
<span class="t" style="left:1866px;top:214.32px;font-size:20.3px;color:#2458d8;font-weight:400;">Interactions</span>
<svg style="left:2010px;top:212px;" width="28" height="26" viewBox="2010 212 28 26"><path d="M2016.5 215.4 H2031.8 A2 2 0 0 1 2033.8 217.4 V229 A2 2 0 0 1 2031.8 231 H2026.3 L2024 233.6 L2021.7 231 H2016.5 A2 2 0 0 1 2014.5 229 V217.4 A2 2 0 0 1 2016.5 215.4 Z" fill="none" stroke="#333" stroke-width="1.6" stroke-linejoin="round"/><path d="M2018.8 220.2 H2029.5 M2018.8 223.8 H2024.5" stroke="#333" stroke-width="1.6"/></svg>
<span class="t" style="left:2041px;top:214.57px;font-size:20px;color:#262626;font-weight:400;">Notes</span>
<div style="left:1708px;top:252px;width:408px;height:1.3px;background:#dcdcdc;"></div>
<div style="left:1845px;top:247px;width:130px;height:4.5px;background:#2458d8;"></div>
<span class="t" style="left:1733px;top:275.53px;font-size:23px;color:#8a8a8a;font-weight:400;">(Placeholder Name)</span>
<div style="left:1708px;top:310.3px;width:408px;height:1.3px;background:#dcdcdc;"></div>
<span class="t" style="left:1733px;top:331.16px;font-size:16px;color:#7a7a7a;font-weight:400;letter-spacing:1.75px;">SHAPE INTERACTIONS</span>
<svg style="left:2060px;top:322px;" width="30" height="30" viewBox="2060 322 30 30"><path d="M2071.5 327.2 H2065 V346.2 H2085 V339" fill="none" stroke="#333" stroke-width="2"/><path d="M2075.3 336.5 L2085 326.8 M2078 326.8 H2085 V334" fill="none" stroke="#333" stroke-width="2"/></svg>
<div style="left:1733.4px;top:369px;width:362.6px;height:45px;background:#2560e0;border-radius:3px;"></div>
<span class="t" style="left:1414.7px;width:1000px;text-align:center;top:381.11px;font-size:23.5px;color:#ffffff;font-weight:400;">New Interaction</span>
<span class="t" style="left:1414px;width:1000px;text-align:center;top:479.85px;font-size:17.9px;color:#7a7a7a;font-weight:400;">COMMON INTERACTIONS</span>
<div style="left:1732.4px;top:517.6px;width:364.1px;height:35.4px;border:1.4px solid #dadada;border-radius:4px;background:#fdfdfc;"></div>
<span class="t" style="left:1414.3px;width:1000px;text-align:center;top:526.94px;font-size:18.5px;color:#888;font-weight:400;">Click or Tap <i class="ar">&#8594;</i> Open Link</span>
<div style="left:1732.4px;top:566.8px;width:364.1px;height:35.4px;border:1.4px solid #dadada;border-radius:4px;background:#fdfdfc;"></div>
<span class="t" style="left:1414.3px;width:1000px;text-align:center;top:576.14px;font-size:18.5px;color:#888;font-weight:400;">Click or Tap <i class="ar">&#8594;</i> Set Visibility</span>
<div style="left:1708px;top:698.8px;width:408px;height:1.3px;background:#dcdcdc;"></div>
<span class="t" style="left:1733px;top:716.66px;font-size:16px;color:#7a7a7a;font-weight:400;letter-spacing:1.4px;">SHAPE PROPERTIES</span>
<div style="left:2010.6px;top:707.8px;width:84.4px;height:30.4px;border:1.3px solid #d6d6d6;border-radius:3px;background:#f0f0f2;"></div>
<span class="t" style="left:1552.5px;width:1000px;text-align:center;top:715.23px;font-size:16.5px;color:#222;font-weight:400;">Show All</span>
<span class="t" style="left:1733px;top:750.68px;font-size:16.8px;color:#2a2a2a;font-weight:400;">Style Effects like MouseOver are auto applied</span>
<span class="t" style="left:1733px;top:769.48px;font-size:16.8px;color:#2a2a2a;font-weight:400;">and others like Error are set with interactions.</span>
<svg style="left:1736px;top:802px;" width="20" height="24" viewBox="1736 802 20 24"><path d="M1746 808.8 V821.5 M1739.8 815.2 H1752.2" stroke="#222" stroke-width="1.6"/></svg>
<span class="t" style="left:1758px;top:804.93px;font-size:20.4px;color:#262626;font-weight:400;">Add Style Effect</span>
</body></html>
